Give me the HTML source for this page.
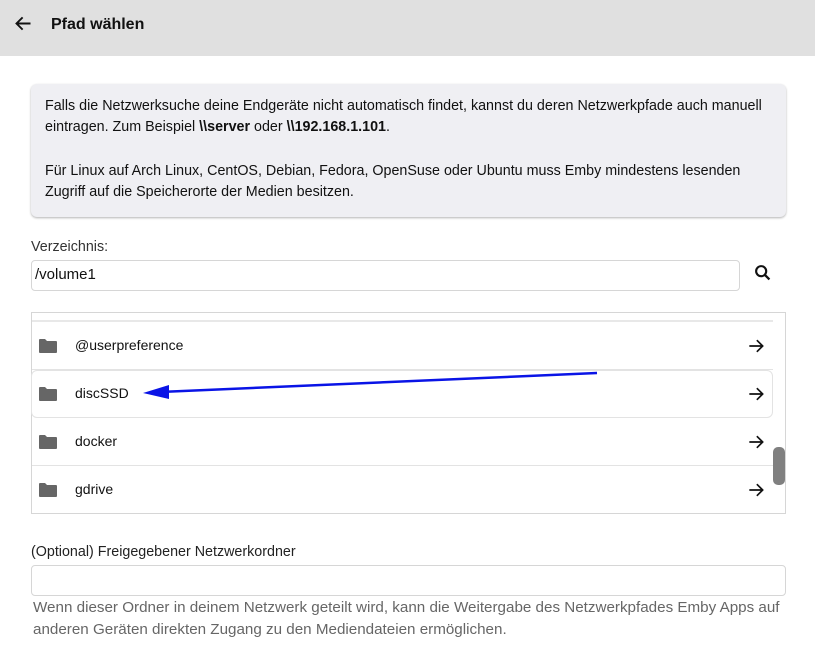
<!DOCTYPE html>
<html><head><meta charset="utf-8"><style>
body{margin:0;width:815px;height:665px;background:#fff;font-family:"Liberation Sans",sans-serif;color:#111;position:relative;overflow:hidden}
.a{position:absolute}
.hdr{left:0;top:0;width:815px;height:56px;background:#e0e0e0}
.info{left:31px;top:84px;width:755px;height:133px;background:#efeff3;border-radius:6px;box-shadow:0 1px 2px rgba(0,0,0,.3)}
.t13{font-size:14.3px;line-height:21px;white-space:nowrap}
.inp{border:1px solid #d6d6d6;border-radius:4px;background:#fff;box-sizing:border-box}
.row{left:32px;width:741px;height:48px;border-bottom:1px solid #e3e3e3;box-sizing:border-box}
.row .n{position:absolute;left:43px;top:15px;font-size:14px}
.row svg.f{position:absolute;left:6px;top:16px}
.row svg.r{position:absolute;left:714px;top:14px}
</style></head><body>
<div class="a hdr"></div>
<svg class="a" style="left:13px;top:13px" width="21" height="21" viewBox="0 0 24 24"><path d="M20 12H5M11 5l-7 7 7 7" fill="none" stroke="#111" stroke-width="2.2"/></svg>
<div class="a" style="left:51px;top:16px;font-size:16px;font-weight:bold">Pfad wählen</div>
<div class="a info"></div>
<div class="a t13" style="left:45px;top:96px">Falls die Netzwerksuche deine Endgeräte nicht automatisch findet, kannst du deren Netzwerkpfade auch manuell<br>eintragen. Zum Beispiel <b>\\server</b> oder <b>\\192.168.1.101</b>.</div>
<div class="a t13" style="left:45px;top:161px">Für Linux auf Arch Linux, CentOS, Debian, Fedora, OpenSuse oder Ubuntu muss Emby mindestens lesenden<br>Zugriff auf die Speicherorte der Medien besitzen.</div>
<div class="a t13" style="left:31px;top:237px;color:#333">Verzeichnis:</div>
<div class="a inp" style="left:31px;top:260px;width:709px;height:31px"></div>
<div class="a" style="left:35px;top:266px;font-size:15px">/volume1</div>
<svg class="a" style="left:752px;top:262px" width="22" height="22" viewBox="0 0 24 24"><circle cx="10" cy="10" r="5.5" fill="none" stroke="#111" stroke-width="2.3"/><path d="M14 14l5 5" stroke="#111" stroke-width="2.5"/></svg>
<div class="a" style="left:31px;top:312px;width:753px;height:200px;border:1px solid #d6d6d6"></div>
<div class="a" style="left:32px;top:320px;width:741px;height:2px;background:#e8e8e8"></div>
<div class="a row" style="top:322px"><svg class="f" width="20" height="16" viewBox="0 0 20 16"><path d="M1 2q0-1 1-1h5l2 2h9q1 0 1 1v10q0 1-1 1H2q-1 0-1-1z" fill="#666"/></svg><div class="n">@userpreference</div><svg class="r" width="20" height="20" viewBox="0 0 24 24"><path d="M4 12h15M13 5l7 7-7 7" fill="none" stroke="#111" stroke-width="2"/></svg></div>
<div class="a row" style="top:370px;border:1px solid #e3e3e3;border-radius:6px;height:48px;left:31px;width:742px"><svg class="f" width="20" height="16" viewBox="0 0 20 16" style="left:6px;top:15px"><path d="M1 2q0-1 1-1h5l2 2h9q1 0 1 1v10q0 1-1 1H2q-1 0-1-1z" fill="#666"/></svg><div class="n" style="left:43px;top:14px">discSSD</div><svg class="r" width="20" height="20" viewBox="0 0 24 24" style="left:714px;top:13px"><path d="M4 12h15M13 5l7 7-7 7" fill="none" stroke="#111" stroke-width="2"/></svg></div>
<div class="a row" style="top:418px"><svg class="f" width="20" height="16" viewBox="0 0 20 16"><path d="M1 2q0-1 1-1h5l2 2h9q1 0 1 1v10q0 1-1 1H2q-1 0-1-1z" fill="#666"/></svg><div class="n">docker</div><svg class="r" width="20" height="20" viewBox="0 0 24 24"><path d="M4 12h15M13 5l7 7-7 7" fill="none" stroke="#111" stroke-width="2"/></svg></div>
<div class="a row" style="top:466px;border-bottom:none"><svg class="f" width="20" height="16" viewBox="0 0 20 16"><path d="M1 2q0-1 1-1h5l2 2h9q1 0 1 1v10q0 1-1 1H2q-1 0-1-1z" fill="#666"/></svg><div class="n">gdrive</div><svg class="r" width="20" height="20" viewBox="0 0 24 24"><path d="M4 12h15M13 5l7 7-7 7" fill="none" stroke="#111" stroke-width="2"/></svg></div>
<div class="a" style="left:773px;top:447px;width:12px;height:38px;background:#808080;border-radius:5px"></div>
<svg class="a" style="left:0;top:0" width="815" height="665"><line x1="597" y1="373" x2="160" y2="392" stroke="#0a14e6" stroke-width="2.5"/><polygon points="143,393 169,385 169,399" fill="#0a14e6"/></svg>
<div class="a t13" style="left:31px;top:542px;color:#222">(Optional) Freigegebener Netzwerkordner</div>
<div class="a inp" style="left:31px;top:565px;width:755px;height:31px"></div>
<div class="a t13" style="left:33px;top:597px;color:#666;line-height:22px;font-size:15.2px">Wenn dieser Ordner in deinem Netzwerk geteilt wird, kann die Weitergabe des Netzwerkpfades Emby Apps auf<br>anderen Geräten direkten Zugang zu den Mediendateien ermöglichen.</div>
</body></html>
